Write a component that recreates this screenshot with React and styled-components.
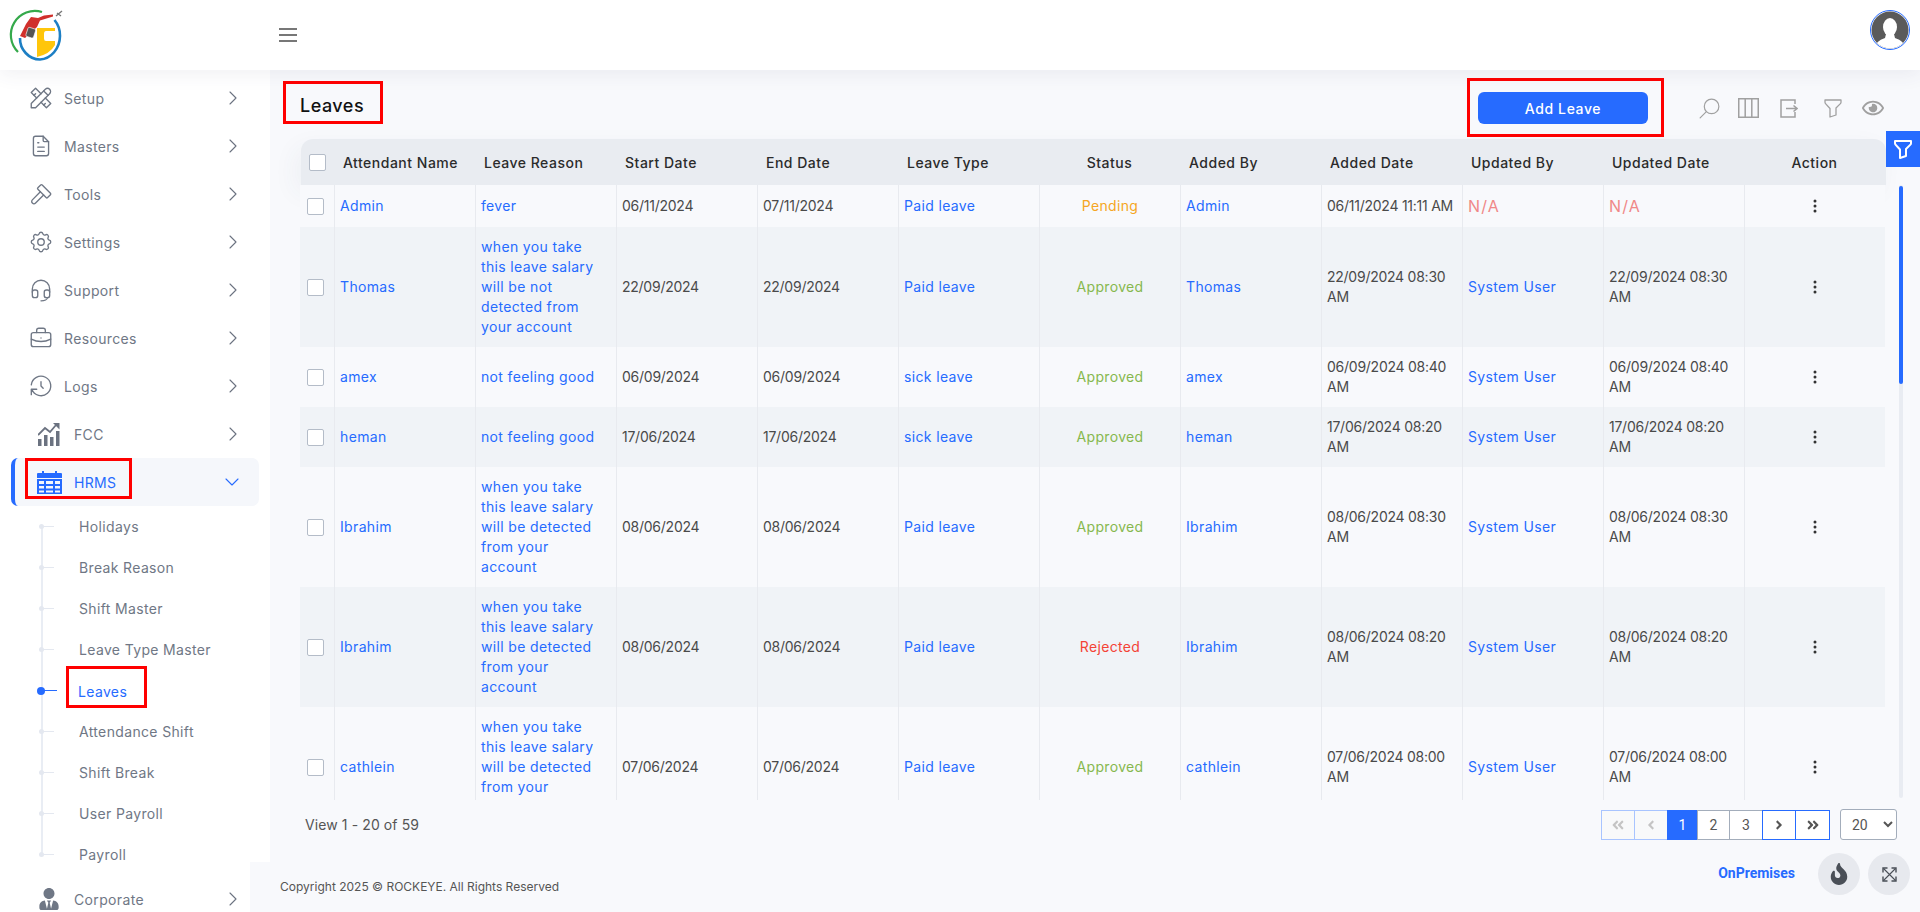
import React from 'react';
import styled, { createGlobalStyle } from 'styled-components';
import { TbTools, TbFileText, TbHammer, TbSettings, TbHeadset, TbBriefcase, TbHistory, TbChevronRight, TbChevronDown, TbSearch, TbFilter } from 'react-icons/tb';
import { FaFire, FaUserTie, FaAngleLeft, FaAngleRight, FaAngleDoubleLeft, FaAngleDoubleRight, FaRegEye } from 'react-icons/fa';
import { BsThreeDotsVertical } from 'react-icons/bs';

const BLUE = '#266bff';
const FONT = '"Inter", "Open Sans", sans-serif';

const GlobalStyle = createGlobalStyle`
  html, body { margin: 0; padding: 0; height: 100%; }
  body {
    font-family: ${FONT};
    font-size: 14px;
    letter-spacing: 0.35px;
    color: #444;
    background: #f8f9fc;
    overflow: hidden;
  }
  * { box-sizing: border-box; }
`;

// Shell
const Shell = styled.div`
  display: flex;
  flex-direction: column;
  height: 100vh;
  overflow: hidden;
`;

const TopBar = styled.header`
  flex: 0 0 70px;
  display: flex;
  align-items: center;
  padding: 0 10px 0 0;
  background: #fff;
  box-shadow: 0 4px 18px rgba(60, 70, 100, 0.08);
  position: relative;
  z-index: 3;
`;

const LogoBox = styled.div`
  width: 279px;
  height: 70px;
  flex: none;
`;

const Hamburger = styled.div`
  width: 18px;
  display: flex;
  flex-direction: column;
  gap: 4px;

  span {
    height: 2px;
    background: #777;
  }
`;

const Avatar = styled.div`
  margin-left: auto;
  width: 40px;
  height: 40px;
  margin-top: -10px;
`;

const Body = styled.div`
  flex: 1;
  min-height: 0;
  display: flex;
`;

// Sidebar
const Sidebar = styled.aside`
  flex: 0 0 270px;
  padding-top: 4px;
  background: #fff;
  overflow: hidden;
`;

const NavRow = styled.div`
  height: 48px;
  display: flex;
  align-items: center;
  gap: ${p => (p.$wide ? 14 : 12)}px;
  padding: 0 25px 0 ${p => (p.$wide ? 38 : 30)}px;
  color: #6f7785;

  > svg:first-child {
    flex: none;
    margin: ${p => (p.$wide ? 0 : '0 -2px')};
  }
`;

const NavLabel = styled.span`
  flex: 1;
`;

const ActiveRow = styled.div`
  height: 48px;
  margin-left: 11px;
  width: 248px;
  display: flex;
  padding-left: 10px;
  padding-right: 15px;
  align-items: center;
  justify-content: space-between;
  background: #f5f7fb;
  border-left: 4px solid ${BLUE};
  border-radius: 7px;
  color: ${BLUE};
`;

const MarkedHrms = styled.div`
  width: 107px;
  height: 41px;
  align-self: flex-start;
  display: flex;
  align-items: center;
  gap: 12px;
  padding: 7px 0 0 9px;
  border: 3px solid #f00;
`;

const SubList = styled.div`
  position: relative;
  &::before {
    content: '';
    position: absolute;
    left: 41px;
    top: 20px;
    bottom: 20px;
    width: 2px;
    background: #e9edf4;
  }
`;

const SubItem = styled.div`
  position: relative;
  height: 41px;
  display: flex;
  align-items: center;
  padding-left: 79px;
  color: #6f7785;

  &::before {
    content: '';
    position: absolute;
    left: 39px;
    top: 18px;
    width: 5px;
    height: 5px;
    border-radius: 50%;
    background: #e4e8f0;
  }
  &::after {
    content: '';
    position: absolute;
    left: 42px;
    top: 20px;
    width: 12px;
    height: 1px;
    background: #e4e8f0;
  }
`;

const ActiveSub = styled(SubItem)`
  padding-left: 66px;
  align-items: flex-start;
  color: ${BLUE};

  &::before {
    left: 37px;
    top: 17px;
    width: 8px;
    height: 8px;
    background: ${BLUE};
  }
  &::after {
    left: 44px;
    width: 13px;
    background: ${BLUE};
  }
`;

const MarkedSub = styled.div`
  width: 81px;
  height: 42px;
  margin-top: -4px;
  padding: 8px 0 0 9px;
  display: flex;
  align-items: center;
  border: 3px solid #f00;
`;

// Main
const Main = styled.main`
  position: relative;
  flex: 1;
  min-width: 0;
  display: flex;
  flex-direction: column;
  background: #f8f9fc;
`;

const Toolbar = styled.div`
  flex: 0 0 69px;
  display: flex;
  align-items: flex-start;
  padding: 0 30px 0 13px;
`;

const PageTitle = styled.h1`
  width: 100px;
  height: 43px;
  margin: 11px 0 0;
  padding: 5px 0 0 14px;
  display: flex;
  align-items: center;
  font-size: 18px;
  font-weight: 500;
  letter-spacing: 0.5px;
  color: #111;
  border: 3px solid #f00;
`;

const MarkedAction = styled.div`
  margin: 8px 0 0 auto;
  width: 197px;
  height: 59px;
  padding: 11px 0 0 8px;
  border: 3px solid #f00;
`;

const PrimaryButton = styled.button`
  width: 170px;
  height: 32px;
  border: 0;
  border-radius: 6px;
  background: ${BLUE};
  color: #fff;
  font: 500 14px ${FONT};
  letter-spacing: 0.6px;
`;

const ToolIcons = styled.div`
  width: 226px;
  height: 26px;
  margin-top: 25px;
  padding-left: 33px;
  display: flex;
  align-items: center;
  color: #a0a0a0;
`;

const ToolSlot = styled.span`
  display: flex;
  margin-left: ${p => p.$gap || 0}px;
  transform: ${p => (p.$flip ? 'scaleX(-1)' : 'none')};
`;

const FilterTab = styled.div`
  position: absolute;
  right: 0;
  top: 61px;
  width: 34px;
  height: 36px;
  display: flex;
  align-items: center;
  justify-content: center;
  background: ${BLUE};
  color: #fff;
`;

const TableArea = styled.div`
  margin-left: 30px;
`;

const HeadRow = styled.div`
  width: 1585px;
  height: 46px;
  margin-left: 1px;
  display: grid;
  grid-template-columns: 33px repeat(11, 141px) 1px;
  background: #e9ecf1;
  border-radius: 12px 12px 0 0;
  box-shadow: -6px 8px 24px rgba(60, 70, 100, 0.05);
`;

const HeadCell = styled.div`
  display: flex;
  align-items: center;
  justify-content: ${p => (p.$center ? 'center' : 'flex-start')};
  padding: 0 ${p => (p.$center ? 0 : 9)}px;
  font-weight: 500;
  letter-spacing: 0.5px;
  color: #2b2b2b;
  white-space: nowrap;
`;

const TableBody = styled.div`
  display: flex;
  gap: 14px;
`;

const Scroller = styled.div`
  width: 1585px;
  height: 615px;
  overflow: hidden;
`;

const ScrollTrack = styled.div`
  width: 4px;
  height: 613px;
  padding-top: 1px;
  border-radius: 2px;
  background: #e9ecf2;
`;

const ScrollThumb = styled.div`
  height: 198px;
  border-radius: 2px;
  background: ${BLUE};
`;

const Row = styled.div`
  width: 1585px;
  display: grid;
  grid-template-columns: 34px repeat(11, 141px);
  background: ${p => (p.$even ? '#f0f3f7' : '#f8f9fc')};
`;

const Cell = styled.div`
  display: flex;
  align-items: center;
  justify-content: ${p => (p.$center ? 'center' : 'flex-start')};
  padding: 10px 5px;
  line-height: 20px;
  white-space: pre;
  border-left: 1px solid #e8eaef;
  letter-spacing: ${p => (p.$date ? '-0.25px' : 'inherit')};
  color: ${p => p.$color || '#4a4a4a'};
`;

const CheckCell = styled.div`
  display: flex;
  align-items: center;
  padding-left: 7px;
`;

const Check = styled.input.attrs({ type: 'checkbox' })`
  appearance: none;
  width: 17px;
  height: 17px;
  margin: 0 0 0 ${p => p.$offset || 0}px;
  background: #fff;
  border: 1px solid #b4bcc8;
  border-radius: 2px;
`;

const NotAvailable = styled.span`
  font-size: 16px;
  line-height: 22px;
  letter-spacing: 1.2px;
  color: #f08888;
`;

// Pager
const PagerRow = styled.div`
  flex: 0 0 62px;
  display: flex;
  align-items: flex-start;
  padding: 10px 23px 0 35px;
`;

const ViewCount = styled.div`
  margin-top: 6px;
  letter-spacing: 0.1px;
  color: #555;
`;

const Pages = styled.div`
  margin-left: auto;
  display: flex;
  font-family: Roboto, sans-serif;
  letter-spacing: 0;
`;

const pageColors = {
  off: ['#f8f9fa', '#a8c4ff', '#c4c4c4'],
  cur: [BLUE, BLUE, '#fff'],
  num: ['#fff', '#a3adbb', '#555'],
  nav: ['#fff', BLUE, '#555'],
};

const PageBtn = styled.div`
  width: ${p => p.$w}px;
  height: 30px;
  margin-left: -1px;
  display: flex;
  align-items: center;
  justify-content: center;
  background: ${p => pageColors[p.$kind][0]};
  border: 1px solid ${p => pageColors[p.$kind][1]};
  color: ${p => pageColors[p.$kind][2]};
`;

const SizeSelect = styled.select`
  width: 57px;
  height: 31px;
  margin: -1px 0 0 10px;
  padding-left: 7px;
  font: 14px Roboto, sans-serif;
  color: #555;
  background: #fff;
  border: 1px solid #a3adbb;
  border-radius: 3px;
`;

// Footer
const Footer = styled.footer`
  position: relative;
  flex: 0 0 50px;
  margin-left: -20px;
  display: flex;
  align-items: flex-start;
  padding: 0 10px 0 30px;
  background: #f8f9fc;
`;

const Copyright = styled.div`
  margin-top: 17px;
  font-size: 12px;
  letter-spacing: 0;
  color: #555;
`;

const Deployment = styled.div`
  margin: 3px 23px 0 auto;
  font: 700 14px Roboto, sans-serif;
  letter-spacing: 0;
  color: ${BLUE};
`;

const RoundButton = styled.div`
  width: 42px;
  height: 42px;
  margin: -9px 0 0 ${p => p.$gap || 0}px;
  border-radius: 50%;
  display: flex;
  align-items: center;
  justify-content: center;
  background: #e7e9ee;
  color: #4a4f57;
`;

// Drawings
const Logo = () => (
  <svg width="70" height="70" viewBox="0 0 70 70">
    <path d="M18 52A24 24 0 0 1 42 12" fill="none" stroke="#35a94b" strokeWidth="2.2" />
    <path d="M20 38A20.5 21 0 0 0 40 59.5A21 24 0 0 0 60 36A24 24 0 0 0 54.5 20" fill="none" stroke="#1d7fc4" strokeWidth="2.6" />
    <path d="M53 14.5L44 15.5L38 18L31 17L26 24L20 36L25 38L37 27L40 20.5L53 16.5Z" fill="#d0302c" />
    <rect x="27" y="28" width="8" height="9.5" rx="1.5" transform="rotate(18 31 32)" fill="#555" stroke="#fff" strokeWidth="0.6" />
    <path d="M56 16L62 11M57 13L61 16" stroke="#777" strokeWidth="1.4" />
    <path d="M37 28H55V31H46Q44 31 44 34V38.5Q44 41 46 41H55V45Q50 54 37 57Z" fill="#ffc60b" />
  </svg>
);

const AvatarImage = () => (
  <svg width="40" height="40" viewBox="0 0 40 40">
    <defs>
      <clipPath id="avatar-clip"><circle cx="20" cy="20" r="18.5" /></clipPath>
    </defs>
    <circle cx="20" cy="20" r="19.5" fill="#fff" stroke={BLUE} strokeWidth="1" />
    <g clipPath="url(#avatar-clip)">
      <rect width="40" height="40" fill="#5a5a5a" />
      <ellipse cx="20" cy="17" rx="7" ry="9" fill="#fff" />
      <path d="M16 24L15 28Q5 31 4 40H36Q35 31 25 28L24 24Z" fill="#fff" />
    </g>
  </svg>
);

const FccIcon = () => (
  <svg width="22" height="24" viewBox="0 0 22 24" fill="#6b7280">
    <rect x="0" y="17" width="3.5" height="7" />
    <rect x="6" y="13" width="3.5" height="11" />
    <rect x="12" y="15" width="3.5" height="9" />
    <rect x="18" y="9" width="3.5" height="15" />
    <path d="M0 13L7 6L12 10L18 3" fill="none" stroke="#6b7280" strokeWidth="1.8" />
    <path d="M15 1H21.5V7.5Z" />
  </svg>
);

const CalendarIcon = () => (
  <svg width="25" height="24" viewBox="0 0 25 24" fill={BLUE}>
    <path d="M1 3H5V1H7V3H18V1H20V3H24Q25 3 25 4V8H0V4Q0 3 1 3Z" />
    <path fillRule="evenodd" d="M0 9H25V24H0ZM2 11V14H7V11ZM9 11V14H16V11ZM18 11V14H23V11ZM2 16V18.5H7V16ZM9 16V18.5H16V16ZM18 16V18.5H23V16ZM2 20.5V22.5H7V20.5ZM9 20.5V22.5H16V20.5ZM18 20.5V22.5H23V20.5Z" />
  </svg>
);

const ColumnsIcon = () => (
  <svg width="21" height="20" viewBox="0 0 21 20" fill="none" stroke="#a0a0a0" strokeWidth="1.5">
    <rect x="0.75" y="0.75" width="19.5" height="18.5" />
    <path d="M7.2 1V19M13.8 1V19" />
  </svg>
);

const ExportIcon = () => (
  <svg width="18" height="19" viewBox="0 0 18 19" fill="none" stroke="#a0a0a0" strokeWidth="1.5">
    <path d="M15 5V1H1V18H15V13" />
    <path d="M6 9.5H17M13.5 6.5L17 9.5L13.5 12.5" />
  </svg>
);

const ExpandIcon = () => (
  <svg width="15" height="15" viewBox="0 0 15 15" fill="none" stroke="#4a4f57" strokeWidth="1.4">
    <path d="M1.5 1.5L13.5 13.5M13.5 1.5L1.5 13.5" strokeWidth="1.1" />
    <path d="M1 5.5V1H5.5M9.5 1H14V5.5M14 9.5V14H9.5M5.5 14H1V9.5" />
  </svg>
);

const menuTop = [
  ['Setup', TbTools],
  ['Masters', TbFileText],
  ['Tools', TbHammer],
  ['Settings', TbSettings],
  ['Support', TbHeadset],
  ['Resources', TbBriefcase],
  ['Logs', TbHistory],
];

const subBefore = ['Holidays', 'Break Reason', 'Shift Master', 'Leave Type Master'];
const subAfter = ['Attendance Shift', 'Shift Break', 'User Payroll', 'Payroll'];

const columns = ['Attendant Name', 'Leave Reason', 'Start Date', 'End Date', 'Leave Type', 'Status', 'Added By', 'Added Date', 'Updated By', 'Updated Date', 'Action'];

const statusColors = { Pending: '#f5a623', Approved: '#86b84e', Rejected: '#f44336' };

const longNot = 'when you take\nthis leave salary\nwill be not\ndetected from\nyour account';
const longIs = 'when you take\nthis leave salary\nwill be detected\nfrom your\naccount';

const rows = [
  { name: 'Admin', reason: 'fever', start: '06/11/2024', end: '07/11/2024', type: 'Paid leave', status: 'Pending', added: '06/11/2024 11:11 AM', by: null, updated: null },
  { name: 'Thomas', reason: longNot, start: '22/09/2024', end: '22/09/2024', type: 'Paid leave', status: 'Approved', added: '22/09/2024 08:30\nAM', by: 'System User', updated: '22/09/2024 08:30\nAM' },
  { name: 'amex', reason: 'not feeling good', start: '06/09/2024', end: '06/09/2024', type: 'sick leave', status: 'Approved', added: '06/09/2024 08:40\nAM', by: 'System User', updated: '06/09/2024 08:40\nAM' },
  { name: 'heman', reason: 'not feeling good', start: '17/06/2024', end: '17/06/2024', type: 'sick leave', status: 'Approved', added: '17/06/2024 08:20\nAM', by: 'System User', updated: '17/06/2024 08:20\nAM' },
  { name: 'Ibrahim', reason: longIs, start: '08/06/2024', end: '08/06/2024', type: 'Paid leave', status: 'Approved', added: '08/06/2024 08:30\nAM', by: 'System User', updated: '08/06/2024 08:30\nAM' },
  { name: 'Ibrahim', reason: longIs, start: '08/06/2024', end: '08/06/2024', type: 'Paid leave', status: 'Rejected', added: '08/06/2024 08:20\nAM', by: 'System User', updated: '08/06/2024 08:20\nAM' },
  { name: 'cathlein', reason: longIs, start: '07/06/2024', end: '07/06/2024', type: 'Paid leave', status: 'Approved', added: '07/06/2024 08:00\nAM', by: 'System User', updated: '07/06/2024 08:00\nAM' },
];

const chevron = <TbChevronRight size={24} strokeWidth={1.1} color="#6b7280" />;

const App = () => (
  <Shell>
    <GlobalStyle />
    <TopBar>
      <LogoBox><Logo /></LogoBox>
      <Hamburger><span /><span /><span /></Hamburger>
      <Avatar><AvatarImage /></Avatar>
    </TopBar>
    <Body>
      <Sidebar>
        {menuTop.map(([label, Icon]) => (
          <NavRow key={label}>
            <Icon size={26} strokeWidth={1.25} />
            <NavLabel>{label}</NavLabel>
            {chevron}
          </NavRow>
        ))}
        <NavRow $wide>
          <FccIcon />
          <NavLabel>FCC</NavLabel>
          {chevron}
        </NavRow>
        <ActiveRow>
          <MarkedHrms>
            <CalendarIcon />
            <span>HRMS</span>
          </MarkedHrms>
          <TbChevronDown size={24} strokeWidth={1.1} />
        </ActiveRow>
        <SubList>
          {subBefore.map(s => <SubItem key={s}>{s}</SubItem>)}
          <ActiveSub><MarkedSub>Leaves</MarkedSub></ActiveSub>
          {subAfter.map(s => <SubItem key={s}>{s}</SubItem>)}
        </SubList>
        <NavRow $wide>
          <FaUserTie size={22} />
          <NavLabel>Corporate</NavLabel>
          {chevron}
        </NavRow>
      </Sidebar>
      <Main>
        <Toolbar>
          <PageTitle>Leaves</PageTitle>
          <MarkedAction><PrimaryButton>Add Leave</PrimaryButton></MarkedAction>
          <ToolIcons>
            <ToolSlot $flip><TbSearch size={25} strokeWidth={1.15} /></ToolSlot>
            <ToolSlot $gap={16}><ColumnsIcon /></ToolSlot>
            <ToolSlot $gap={21}><ExportIcon /></ToolSlot>
            <ToolSlot $gap={23}><TbFilter size={24} strokeWidth={1.3} /></ToolSlot>
            <ToolSlot $gap={17}><FaRegEye size={22} /></ToolSlot>
          </ToolIcons>
        </Toolbar>
        <FilterTab><TbFilter size={24} strokeWidth={2} /></FilterTab>
        <TableArea>
          <HeadRow>
            <CheckCell><Check $offset={1} /></CheckCell>
            {columns.map(c => (
              <HeadCell key={c} $center={c === 'Status' || c === 'Action'}>{c}</HeadCell>
            ))}
          </HeadRow>
          <TableBody>
            <Scroller>
              {rows.map((r, i) => (
                <Row key={i} $even={i % 2 === 1}>
                  <CheckCell><Check /></CheckCell>
                  <Cell $color={BLUE}>{r.name}</Cell>
                  <Cell $color={BLUE}>{r.reason}</Cell>
                  <Cell $date>{r.start}</Cell>
                  <Cell $date>{r.end}</Cell>
                  <Cell $color={BLUE}>{r.type}</Cell>
                  <Cell $center $color={statusColors[r.status]}>{r.status}</Cell>
                  <Cell $color={BLUE}>{r.name}</Cell>
                  <Cell $date>{r.added}</Cell>
                  <Cell $color={BLUE}>{r.by || <NotAvailable>N/A</NotAvailable>}</Cell>
                  <Cell $date>{r.updated || <NotAvailable>N/A</NotAvailable>}</Cell>
                  <Cell $center $color="#333"><BsThreeDotsVertical size={16} /></Cell>
                </Row>
              ))}
            </Scroller>
            <ScrollTrack><ScrollThumb /></ScrollTrack>
          </TableBody>
        </TableArea>
        <PagerRow>
          <ViewCount>View 1 - 20 of 59</ViewCount>
          <Pages>
            <PageBtn $w={34} $kind="off"><FaAngleDoubleLeft size={14} /></PageBtn>
            <PageBtn $w={34} $kind="off"><FaAngleLeft size={14} /></PageBtn>
            <PageBtn $w={31} $kind="cur">1</PageBtn>
            <PageBtn $w={33} $kind="num">2</PageBtn>
            <PageBtn $w={34} $kind="num">3</PageBtn>
            <PageBtn $w={34} $kind="nav"><FaAngleRight size={14} /></PageBtn>
            <PageBtn $w={35} $kind="nav"><FaAngleDoubleRight size={14} /></PageBtn>
          </Pages>
          <SizeSelect defaultValue="20">
            <option>10</option>
            <option>20</option>
            <option>50</option>
          </SizeSelect>
        </PagerRow>
        <Footer>
          <Copyright>Copyright 2025 © ROCKEYE. All Rights Reserved</Copyright>
          <Deployment>OnPremises</Deployment>
          <RoundButton><FaFire size={22} /></RoundButton>
          <RoundButton $gap={8}><ExpandIcon /></RoundButton>
        </Footer>
      </Main>
    </Body>
  </Shell>
);

export default App;
